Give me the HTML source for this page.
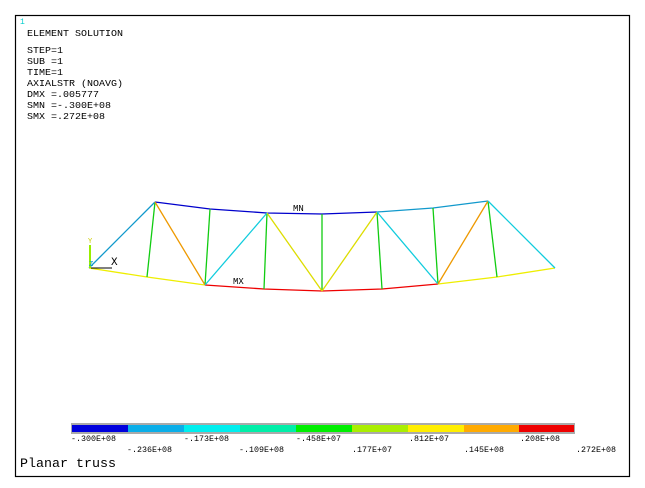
<!DOCTYPE html>
<html><head><style>
html,body{margin:0;padding:0;background:#fff;}
svg{display:block}
text{font-family:"Liberation Mono",monospace;}
</style></head><body>
<svg width="645" height="488" viewBox="0 0 645 488" xmlns="http://www.w3.org/2000/svg">
<rect x="0" y="0" width="645" height="488" fill="#fff"/>
<rect x="15.5" y="15.5" width="614" height="461" fill="#fff" stroke="#000" stroke-width="1.2"/>
<text x="20" y="24" font-size="8" fill="#0cc">1</text>
<g font-size="9" fill="#000" font-family="Liberation Serif,serif">
<text x="27" y="36" textLength="96" lengthAdjust="spacingAndGlyphs">ELEMENT SOLUTION</text>
<text x="27" y="53" textLength="36" lengthAdjust="spacingAndGlyphs">STEP=1</text>
<text x="27" y="64" textLength="36" lengthAdjust="spacingAndGlyphs">SUB =1</text>
<text x="27" y="75" textLength="36" lengthAdjust="spacingAndGlyphs">TIME=1</text>
<text x="27" y="86" textLength="96" lengthAdjust="spacingAndGlyphs">AXIALSTR (NOAVG)</text>
<text x="27" y="97" textLength="72" lengthAdjust="spacingAndGlyphs">DMX =.005777</text>
<text x="27" y="108" textLength="84" lengthAdjust="spacingAndGlyphs">SMN =-.300E+08</text>
<text x="27" y="119" textLength="78" lengthAdjust="spacingAndGlyphs">SMX =.272E+08</text>
</g>
<g fill="none" stroke-width="1.3">
<polyline points="89,268 147,277 205,285" stroke="#ee0"/>
<polyline points="205,285 264,289 322,291 382,289 438,284" stroke="#e00"/>
<polyline points="438,284 497,277 555,268" stroke="#ee0"/>
<polyline points="155,202 210,209 267,213 322,214 377,212" stroke="#00c"/>
<polyline points="377,212 433,208 488,201" stroke="#19c"/>
<g stroke="#1c1">
<line x1="155" y1="202" x2="147" y2="277"/>
<line x1="210" y1="209" x2="205" y2="285"/>
<line x1="267" y1="213" x2="264" y2="289"/>
<line x1="322" y1="214" x2="322" y2="291"/>
<line x1="377" y1="212" x2="382" y2="289"/>
<line x1="433" y1="208" x2="438" y2="284"/>
<line x1="488" y1="201" x2="497" y2="277"/>
</g>
<line x1="89" y1="268" x2="155" y2="202" stroke="#19c"/>
<line x1="155" y1="202" x2="205" y2="285" stroke="#e90"/>
<line x1="205" y1="285" x2="267" y2="213" stroke="#1cd"/>
<line x1="267" y1="213" x2="322" y2="291" stroke="#dd0"/>
<line x1="322" y1="291" x2="377" y2="212" stroke="#dd0"/>
<line x1="377" y1="212" x2="438" y2="284" stroke="#1cd"/>
<line x1="438" y1="284" x2="488" y2="201" stroke="#e90"/>
<line x1="488" y1="201" x2="555" y2="268" stroke="#1cd"/>
</g>
<text x="293" y="211" font-size="9" fill="#000" font-family="Liberation Serif,serif">MN</text>
<text x="233" y="284" font-size="9" fill="#000" font-family="Liberation Serif,serif">MX</text>
<line x1="90" y1="268" x2="90" y2="245" stroke="#9e0" stroke-width="2"/>
<text x="88" y="243" font-size="7" fill="#cc0">Y</text>
<text x="89" y="266" font-size="7" fill="#09c">Z</text>
<line x1="91" y1="268" x2="112" y2="268" stroke="#000" stroke-width="1"/>
<text x="111" y="265" font-size="11" fill="#000" font-family="Liberation Serif,serif">X</text>
<rect x="71" y="423" width="504" height="11" fill="#aaa"/>
<rect x="72" y="425" width="56" height="7" fill="#0000dd"/>
<rect x="128" y="425" width="56" height="7" fill="#0aaee8"/>
<rect x="184" y="425" width="56" height="7" fill="#00eeee"/>
<rect x="240" y="425" width="56" height="7" fill="#00eea8"/>
<rect x="296" y="425" width="56" height="7" fill="#00ee00"/>
<rect x="352" y="425" width="56" height="7" fill="#aaee00"/>
<rect x="408" y="425" width="56" height="7" fill="#ffee00"/>
<rect x="464" y="425" width="55" height="7" fill="#ffaa00"/>
<rect x="519" y="425" width="55" height="7" fill="#ee0000"/>
<g font-size="8" fill="#000" font-family="Liberation Serif,serif">
<text x="71" y="441" textLength="45" lengthAdjust="spacingAndGlyphs">-.300E+08</text>
<text x="184" y="441" textLength="45" lengthAdjust="spacingAndGlyphs">-.173E+08</text>
<text x="296" y="441" textLength="45" lengthAdjust="spacingAndGlyphs">-.458E+07</text>
<text x="409" y="441" textLength="40" lengthAdjust="spacingAndGlyphs">.812E+07</text>
<text x="520" y="441" textLength="40" lengthAdjust="spacingAndGlyphs">.208E+08</text>
<text x="127" y="452" textLength="45" lengthAdjust="spacingAndGlyphs">-.236E+08</text>
<text x="239" y="452" textLength="45" lengthAdjust="spacingAndGlyphs">-.109E+08</text>
<text x="352" y="452" textLength="40" lengthAdjust="spacingAndGlyphs">.177E+07</text>
<text x="464" y="452" textLength="40" lengthAdjust="spacingAndGlyphs">.145E+08</text>
<text x="576" y="452" textLength="40" lengthAdjust="spacingAndGlyphs">.272E+08</text>
</g>
<text x="20" y="467" font-size="13" fill="#000" textLength="96" lengthAdjust="spacingAndGlyphs">Planar truss</text>
</svg>
</body></html>
